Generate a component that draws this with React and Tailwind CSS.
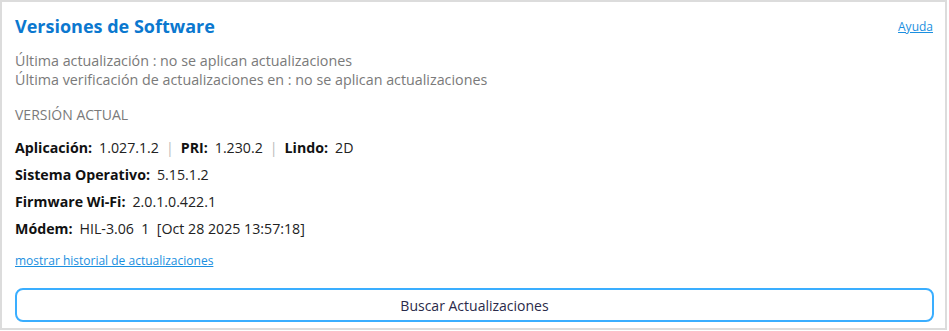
export default function App() {
  const rows = [
    [["Aplicación:", "1.027.1.2"], ["PRI:", "1.230.2"], ["Lindo:", "2D"]],
    [["Sistema Operativo:", "5.15.1.2"]],
    [["Firmware Wi-Fi:", "2.0.1.0.422.1"]],
    [["Módem:", "HIL-3.06  1  [Oct 28 2025 13:57:18]"]],
  ];
  return (
    <div className="w-[947px] h-[330px] bg-white border-2 border-[#dcdcdc] font-['Open_Sans',sans-serif] text-[#222]">
      <div className="flex items-start justify-between pl-[13px] pr-[12px] pt-[9px]">
        <h1 className="text-[18px] leading-[30px] font-bold text-[#0b78cf]">Versiones de Software</h1>
        <a className="mt-[7px] text-[12px] leading-[18px] text-[#1a8fe0] underline">Ayuda</a>
      </div>
      <div className="pl-[13px] pt-[10px] text-[14.3px] leading-[19px] text-[#7a7a7a]">
        <div>Última actualización : no se aplican actualizaciones</div>
        <div>Última verificación de actualizaciones en : no se aplican actualizaciones</div>
      </div>
      <div className="pl-[13px] pt-[17px] text-[14px] leading-[18px] text-[#7a7a7a]">VERSIÓN ACTUAL</div>
      <div className="pl-[13px] pt-[14px] flex flex-col gap-[8px] text-[14.2px] leading-[19px]">
        {rows.map((row, i) => (
          <div key={i} className="flex items-center">
            {row.map(([k, v], j) => (
              <span key={j} className="flex items-center whitespace-pre">
                {j > 0 && <span className="mx-[7px] text-[#bbb]">|</span>}
                <b className="font-bold text-[#111]">{k}</b>
                <span className="ml-[7px] text-[#222]">{v}</span>
              </span>
            ))}
          </div>
        ))}
      </div>
      <div className="pl-[13px] pt-[9px]">
        <a className="text-[12px] leading-[16px] text-[#1a8fe0] underline">mostrar historial de actualizaciones</a>
      </div>
      <div className="pl-[13px] pr-[11px] pt-[17px]">
        <button className="w-full h-[34px] rounded-[8px] border-2 border-[#3aaeff] bg-white text-[14px] text-[#2a2a4a]">
          Buscar Actualizaciones
        </button>
      </div>
    </div>
  );
}
